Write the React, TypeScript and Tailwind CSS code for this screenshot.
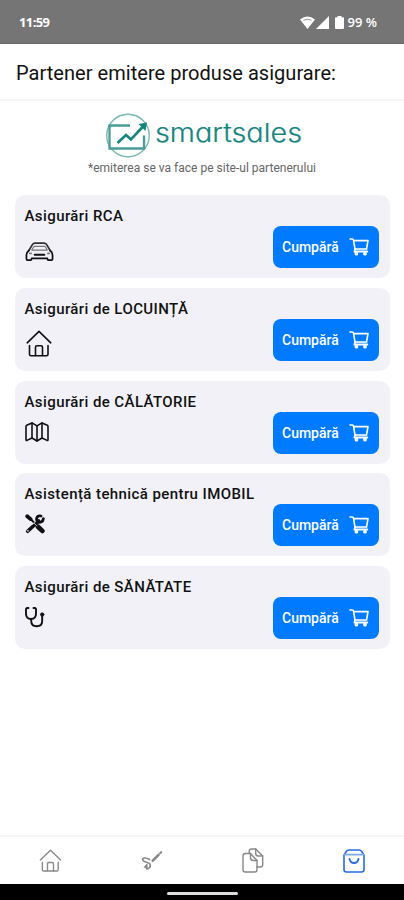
import type { ReactNode, SVGProps } from "react";

function Icon(props: SVGProps<SVGSVGElement>) {
  return (
    <svg
      fill="none"
      stroke="currentColor"
      strokeLinecap="round"
      strokeLinejoin="round"
      aria-hidden="true"
      {...props}
    />
  );
}

function HouseIcon({ className }: { className: string }) {
  return (
    <Icon viewBox="0 0 26 28" className={className} strokeWidth={1.6}>
      <path d="M1.2 12.800 13 1.400l11.800 11.400" />
      <path d="M3.500 15.500v8.700q0 1.500 1.500 1.500h15.500q1.500 0 1.500-1.500v-8.700" />
      <path d="M9.500 25.500V17.200q0-1.500 1.500-1.500h4q1.500 0 1.500 1.500v8.300" />
    </Icon>
  );
}

function CarIcon() {
  return (
    <Icon viewBox="0 0 30 22" className="h-[22px] w-[29px]" strokeWidth={1.8}>
      <path d="M4 9.500 7.600 3.400Q8.500 1.800 10.500 1.800h9q2 0 2.900 1.600L26 9.500" stroke="#333" />
      <path d="M7 9 8.700 6q.4-.9 1.500-.9h9.600q1.100 0 1.500.9L23 9z" stroke="#777" strokeWidth={1.200} />
      <path d="M4 9.500Q1.500 11.500 1.500 14v4.300q0 1 1 1h3.300q1 0 1-1v-.6h16.400v.6q0 1 1 1h3.300q1 0 1-1V14q0-2.500-2.500-4.500" />
      <path d="M10 13.800h10" strokeWidth={2} />
      <path d="M5 12.500h1.300M23.700 12.500H25" stroke="#777" />
    </Icon>
  );
}

function MapIcon() {
  return (
    <Icon viewBox="0 0 24 20" className="h-5 w-6" strokeWidth={1.600}>
      <path d="M1 4.500q0-.8.700-1.200L7 .9l5 3 5-3 5.300 2.400q.7.400.7 1.200v13.300q0 1-1 .6L17 16l-5 3-5-3-5 2.400q-1 .4-1-.6z" />
      <path d="M7 1v15M12 4v15M17 1v15" />
    </Icon>
  );
}

function ToolsIcon() {
  return (
    <Icon viewBox="0 0 20 20" className="h-5 w-5">
      <path d="M2.700 17.300 13.700 7" strokeWidth={3.600} />
      <path d="M16 2q-3.400-.8-4.200 1.800-.7 2.200.7 3.600 1.600 1.500 3.700.6 2-.8 2.200-3.300" strokeWidth={2.800} />
      <path d="m2.200 2.200 3.400 2.900" strokeWidth={3.800} />
      <path d="m5 4.500 8 8" strokeWidth={1.800} />
      <path d="m13 12.700 4.300 4.200" strokeWidth={4.800} />
      <path d="m7.500 10.500 3.300-3M9 9l3 3" stroke="#f2f1f8" strokeWidth={0.700} />
      <circle cx="3" cy="16.900" r=".8" fill="#f2f1f8" stroke="none" />
    </Icon>
  );
}

function StethoscopeIcon() {
  return (
    <Icon viewBox="0 0 20 21" className="h-[21px] w-5" strokeWidth={1.900}>
      <path d="M3.500 1H2.300Q1 1 1 2.500v4.300q0 5.200 5 5.200t5-5.200V2.500Q11 1 9.700 1H8.500" />
      <path d="M6.200 12.400v1.400q0 5.500 5.500 5.500t5.500-5.500V9" />
      <circle cx="17.200" cy="7.500" r="1.700" fill="currentColor" strokeWidth={0.800} />
    </Icon>
  );
}

function CartIcon() {
  return (
    <Icon viewBox="0 0 20 18" className="h-[18px] w-5" strokeWidth={1.600}>
      <path d="M1 1h2.300q1 0 1.200 1.200L6 11h11.500L19 2.600H4.600" />
      <path d="m6 11.200-.7 2.500h13.200" />
      <path d="M6 12.400h12" strokeOpacity={0.500} />
      <circle cx="7.400" cy="15.700" r="1.100" />
      <circle cx="16" cy="15.700" r="1.100" />
    </Icon>
  );
}

function SignIcon() {
  return (
    <Icon viewBox="0 0 22 21" className="h-[21px] w-[22px]">
      <path d="M8.500 9.500Q6 7.800 3.200 8 1 8.600 2 10.500q.8 1 3.500 1.700 4 1 3.800 3.500-.3 3-3.600 3.100" strokeWidth={1.700} />
      <path d="m3.200 17 3-3.200v4.600z" fill="currentColor" strokeWidth={0.700} />
      <path d="M11.800 10.700 17.500 4.800" strokeWidth={2.600} />
      <path d="m19.300 3 .8-.8" strokeWidth={2.300} />
    </Icon>
  );
}

function DocumentsIcon() {
  return (
    <Icon viewBox="0 0 22 25" className="h-[25px] w-[22px]" strokeWidth={1.400}>
      <path d="M3.500 5.500h5l6.500 7v9.200q0 2.300-2.300 2.300H3.300Q1 24 1 21.700V8q0-2.500 2.500-2.500z" />
      <path d="M8.500 5.500v4.200q0 2.800 2.800 2.800H15" />
      <path d="M7.200 5.300V3.200Q7.200 1 9.500 1h4.200l7 7v8.700q0 2.300-2.300 2.300H15" />
      <path d="M13.700 1v4.500Q13.700 8 16.200 8h4.500" />
    </Icon>
  );
}

function BagIcon() {
  return (
    <Icon viewBox="0 0 22 24" className="h-6 w-[22px]" strokeWidth={1.600}>
      <path d="M1 6.200 3.300 2.500Q4.200 1 5.800 1h10.400q1.600 0 2.500 1.500L21 6.200v14.300q0 2.500-2.500 2.500h-15Q1 23 1 20.500z" />
      <path d="M1.800 5.700h18.400" strokeWidth={1.800} stroke="#7ea8f5" />
      <path d="M6.500 10q.8 4 4.500 4t4.500-4" strokeWidth={1.800} />
    </Icon>
  );
}

function StatusBar() {
  return (
    <div className="flex h-11 shrink-0 items-center justify-between border-b border-[#686868] bg-[#757575] pt-0.5 pr-[27px] pl-[19px] text-[13px] font-bold text-white">
      <span className="font-['Open_Sans',sans-serif] tracking-[-0.6px]">11:59</span>
      <div className="flex items-center">
        <svg viewBox="0 0 15 13" className="h-[13px] w-[15px]" fill="currentColor">
          <path d="M0 3.600Q7.500-2.600 15 3.600L7.500 13z" />
          <path d="M3.500 4.300q4-2.300 8 0" fill="none" stroke="#757575" strokeWidth=".8" />
        </svg>
        <svg viewBox="0 0 13 13" className="ml-px h-[13px] w-[13px]" fill="currentColor">
          <path d="M13 0v13H0z" />
        </svg>
        <svg viewBox="0 0 9 13" className="ml-1.5 h-[13px] w-[9px]" fill="currentColor">
          <path d="M2.500 1.200V0h4v1.200H8q1 0 1 1V12q0 1-1 1H1q-1 0-1-1V2.200q0-1 1-1z" />
        </svg>
        <span className="ml-1 font-['Open_Sans',sans-serif] text-[13px] font-semibold">99 %</span>
      </div>
    </div>
  );
}

function Logo() {
  return (
    <svg viewBox="0 0 198 46" className="ml-[3px] h-[46px] w-[198px]" fill="none" aria-label="smartsales">
      <circle cx="23" cy="22.500" r="21.300" stroke="#76bbb3" strokeWidth="1.400" />
      <path d="M25 12.500H4.500v23H39v-13" stroke="#4a9c9a" strokeWidth="2.300" />
      <path d="m12.500 30 8.500-8 5 4.500L38.500 13" stroke="#16857f" strokeWidth="2.600" />
      <path d="M33.500 11 42 9.500 40.500 18z" fill="#16857f" />
      <text
        x="50"
        y="28.500"
        textLength="147"
        lengthAdjust="spacingAndGlyphs"
        className="font-['Inter',sans-serif] text-[26px] font-light [font-feature-settings:'cv11']"
        fill="#16857f"
        stroke="#16857f"
        strokeWidth="0.2"
      >
        smartsales
      </text>
    </svg>
  );
}

function ProductCard({ title, children }: { title: string; children: ReactNode }) {
  return (
    <section className="flex h-[83px] justify-between rounded-[10px] bg-[#f2f1f8] pr-[11px] pl-2.5">
      <div className="w-0 pt-[11px] whitespace-nowrap text-[#111]">
        <h2 className="text-[15px] leading-5 font-medium tracking-[0.41px]">{title}</h2>
        {children}
      </div>
      <button className="mb-2.5 flex h-[42px] w-[106px] items-center justify-between self-end rounded-lg bg-[#007bff] pr-2.5 pl-[9.5px] text-sm font-medium text-white">
        Cumpără
        <CartIcon />
      </button>
    </section>
  );
}

export default function App() {
  return (
    <main className="flex h-[900px] w-[404px] flex-col overflow-hidden bg-white font-['Roboto',sans-serif]">
      <StatusBar />
      <header className="flex h-[57px] shrink-0 items-center border-b-2 border-[#f5f5f5] pt-[3px] pl-4">
        <h1 className="text-[20px] tracking-[0.04px] whitespace-nowrap text-[#111]">Partener emitere produse asigurare:</h1>
      </header>
      <div className="flex h-[94px] shrink-0 flex-col items-center pt-3">
        <Logo />
        <p className="-mt-px text-[12px] leading-5 tracking-[0.01px] whitespace-nowrap text-[#666]">*emiterea se va face pe site-ul partenerului</p>
      </div>
      <div className="flex flex-1 flex-col gap-[9.8px] px-[14.5px]">
        <ProductCard title="Asigurări RCA">
          <div className="mt-[15px]"><CarIcon /></div>
        </ProductCard>
        <ProductCard title="Asigurări de LOCUINȚĂ">
          <HouseIcon className="mt-[11px] ml-[1.5px] h-[28px] w-[26px]" />
        </ProductCard>
        <ProductCard title="Asigurări de CĂLĂTORIE">
          <div className="mt-2.5"><MapIcon /></div>
        </ProductCard>
        <ProductCard title="Asistență tehnică pentru IMOBIL">
          <div className="mt-2.5"><ToolsIcon /></div>
        </ProductCard>
        <ProductCard title="Asigurări de SĂNĂTATE">
          <div className="mt-2.5"><StethoscopeIcon /></div>
        </ProductCard>
      </div>
      <nav className="grid h-[49px] shrink-0 grid-cols-4 place-items-center border-t-2 border-[#f5f5f5] text-[#888]">
        <HouseIcon className="h-6 w-[23px]" />
        <SignIcon />
        <DocumentsIcon />
        <div className="text-[#286be9]"><BagIcon /></div>
      </nav>
      <footer className="flex h-4 shrink-0 items-center justify-center bg-black pt-0.5">
        <span className="h-[3px] w-[71px] rounded-full bg-[#ddd]" />
      </footer>
    </main>
  );
}
